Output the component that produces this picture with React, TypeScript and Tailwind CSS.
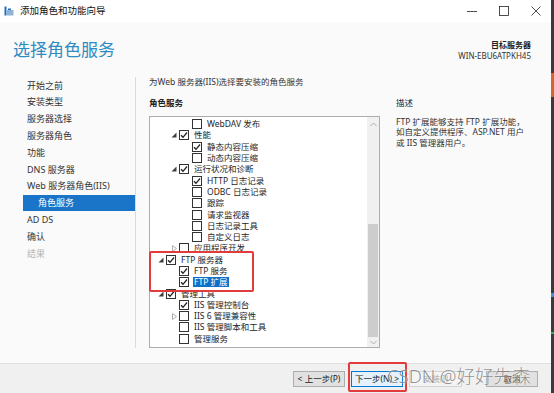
import React from 'react';

type Row = {
  level: 1 | 2 | 3;
  text: string;
  checked: boolean;
  arrow?: 'open' | 'closed';
  selected?: boolean;
};

const rows: Row[] = [
  { level: 3, text: 'WebDAV 发布', checked: false },
  { level: 2, text: '性能', checked: true, arrow: 'open' },
  { level: 3, text: '静态内容压缩', checked: true },
  { level: 3, text: '动态内容压缩', checked: false },
  { level: 2, text: '运行状况和诊断', checked: true, arrow: 'open' },
  { level: 3, text: 'HTTP 日志记录', checked: true },
  { level: 3, text: 'ODBC 日志记录', checked: false },
  { level: 3, text: '跟踪', checked: false },
  { level: 3, text: '请求监视器', checked: false },
  { level: 3, text: '日志记录工具', checked: false },
  { level: 3, text: '自定义日志', checked: false },
  { level: 2, text: '应用程序开发', checked: false, arrow: 'closed' },
  { level: 1, text: 'FTP 服务器', checked: true, arrow: 'open' },
  { level: 2, text: 'FTP 服务', checked: true },
  { level: 2, text: 'FTP 扩展', checked: true, selected: true },
  { level: 1, text: '管理工具', checked: true, arrow: 'open' },
  { level: 2, text: 'IIS 管理控制台', checked: true },
  { level: 2, text: 'IIS 6 管理兼容性', checked: false, arrow: 'closed' },
  { level: 2, text: 'IIS 管理脚本和工具', checked: false },
  { level: 2, text: '管理服务', checked: false },
];

const indent = { 1: 'pl-[6px]', 2: 'pl-[19px]', 3: 'pl-[32px]' };

const navItems = [
  '开始之前',
  '安装类型',
  '服务器选择',
  '服务器角色',
  '功能',
  'DNS 服务器',
  'Web 服务器角色(IIS)',
];

const Checkbox = ({ checked }: { checked: boolean }) => (
  <span className="w-[10px] h-[10px] border border-[#333] bg-white flex items-center justify-center shrink-0">
    {checked && (
      <svg width="8" height="8" viewBox="0 0 8 8">
        <path d="M1 4.2 L3 6.3 L7 1.5" fill="none" stroke="#222" strokeWidth="1.3" />
      </svg>
    )}
  </span>
);

const Arrow = ({ kind }: { kind?: 'open' | 'closed' }) => (
  <span className="w-[10px] h-[10px] flex items-center justify-center shrink-0">
    {kind === 'open' && (
      <svg width="6" height="6" viewBox="0 0 6 6">
        <path d="M5.5 0.5 L5.5 5.5 L0.5 5.5 Z" fill="#404040" />
      </svg>
    )}
    {kind === 'closed' && (
      <svg width="5" height="7" viewBox="0 0 5 7">
        <path d="M0.5 0.5 L4.5 3.5 L0.5 6.5 Z" fill="none" stroke="#a6a6a6" strokeWidth="0.9" />
      </svg>
    )}
  </span>
);

const TreeRow = ({ row }: { row: Row }) => (
  <div className={`h-[11.3px] flex items-center ${indent[row.level]}`}>
    <Arrow kind={row.arrow} />
    <Checkbox checked={row.checked} />
    <span
      className={`ml-[4px] leading-[10px] px-[1px] ${
        row.selected ? 'bg-[#0d6fca] text-white' : 'text-[#1e1e1e]'
      }`}
    >
      {row.text}
    </span>
  </div>
);

const App: React.FC = () => {
  return (
    <div className="w-[554px] h-[393px] flex overflow-hidden bg-[#3a3a3a] font-['Noto_Sans','Noto_Sans_CJK_SC',sans-serif] text-[8.5px] text-[#1e1e1e]">
      <div className="w-[551px] flex flex-col bg-[#fafafa]">
        {/* title bar */}
        <div className="h-[22px] bg-white flex items-center shrink-0">
          <svg width="10" height="10" viewBox="0 0 10 10" className="ml-[4px]">
            <rect x="0.5" y="0.5" width="2" height="9" fill="#1f6fbf" />
            <rect x="3" y="4" width="6.5" height="5.5" fill="#8fb3d6" />
            <rect x="4" y="2.5" width="3" height="1.5" fill="#1f6fbf" />
          </svg>
          <span className="ml-[6px] text-[9.5px] text-[#111]">添加角色和功能向导</span>
          <div className="ml-auto flex items-center">
            <svg width="10" height="10" viewBox="0 0 10 10" className="mr-[22px]">
              <path d="M0 5.5 H10" stroke="#222" strokeWidth="0.8" />
            </svg>
            <svg width="10" height="10" viewBox="0 0 10 10" className="mr-[22px]">
              <rect x="0.5" y="0.5" width="9" height="9" fill="none" stroke="#222" strokeWidth="0.8" />
            </svg>
            <svg width="10" height="10" viewBox="0 0 10 10" className="mr-[10px]">
              <path d="M0.5 0.5 L9.5 9.5 M9.5 0.5 L0.5 9.5" stroke="#222" strokeWidth="0.8" />
            </svg>
          </div>
        </div>

        {/* header */}
        <div className="h-[55px] flex items-start justify-between shrink-0">
          <div className="ml-[13px] mt-[16px] text-[17px] leading-[24px] text-[#2f8cc0]">选择角色服务</div>
          <div className="mr-[20px] mt-[17px] text-right leading-[11px] text-[8px]">
            <div className="font-semibold text-[#222]">目标服务器</div>
            <div className="text-[#333]">WIN-EBU6ATPKH45</div>
          </div>
        </div>

        {/* body */}
        <div className="flex-1 flex pb-[15px]">
          <div className="w-[136px] border-r border-[#dadada] text-[9px] shrink-0">
            {navItems.map((item) => (
              <div key={item} className="h-[16.8px] flex items-center pl-[27px] text-[#333]">
                {item}
              </div>
            ))}
            <div className="h-[16.8px] ml-[23px] flex items-center pl-[15px] bg-[#1a74c7] text-white">角色服务</div>
            <div className="h-[16.8px] flex items-center pl-[27px] text-[#333]">AD DS</div>
            <div className="h-[16.8px] flex items-center pl-[27px] text-[#333]">确认</div>
            <div className="h-[16.8px] flex items-center pl-[27px] text-[#b4b4b4]">结果</div>
          </div>

          <div className="w-[244px] pl-[13px] flex flex-col shrink-0">
            <div className="leading-[10px] text-[#333]">为Web 服务器(IIS)选择要安装的角色服务</div>
            <div className="mt-[11px] leading-[10px] font-semibold text-[#222]">角色服务</div>
            <div className="mt-[8px] h-[232px] w-[231px] border border-[#abadb3] bg-white flex relative">
              <div className="flex-1 pt-[1.5px]">
                {rows.map((r) => (
                  <TreeRow key={r.text} row={r} />
                ))}
              </div>
              <div className="w-[12px] bg-[#f0f0f0] flex flex-col">
                <div className="h-[14px] flex items-center justify-center">
                  <svg width="7" height="5" viewBox="0 0 7 5">
                    <path d="M0.5 4 L3.5 1 L6.5 4" fill="none" stroke="#a8a8a8" strokeWidth="0.9" />
                  </svg>
                </div>
                <div className="flex-1" />
                <div className="h-[113px] mx-[1px] bg-[#cdcdcd]" />
                <div className="h-[10px] flex items-center justify-center">
                  <svg width="7" height="5" viewBox="0 0 7 5">
                    <path d="M0.5 1 L3.5 4 L6.5 1" fill="none" stroke="#a8a8a8" strokeWidth="0.9" />
                  </svg>
                </div>
              </div>
              <div className="absolute left-[-1px] top-[134px] w-[105px] h-[41px] border-2 border-[#e23b3b] rounded-[2px]" />
            </div>
          </div>

          <div className="flex-1 pl-[16px] pt-[21px]">
            <div className="leading-[10px] text-[#222]">描述</div>
            <div className="mt-[9px] leading-[10.3px] text-[#333]">
              FTP 扩展能够支持 FTP 扩展功能，
              <br />
              如自定义提供程序、ASP.NET 用户
              <br />
              或 IIS 管理器用户。
            </div>
          </div>
        </div>

        {/* footer */}
        <div className="h-[30px] border-t border-[#dfdfdf] bg-[#f0f0f0] flex items-center justify-end pr-[13px] relative shrink-0">
          <button className="w-[52px] h-[16px] border border-[#adadad] bg-[#e1e1e1] text-[8.5px] leading-[14px] text-[#222]">
            &lt; 上一步(P)
          </button>
          <button className="ml-[6px] w-[52px] h-[16px] border border-[#0078d7] bg-[#e5f1fb] text-[8.5px] leading-[14px] text-[#222]">
            下一步(N) &gt;
          </button>
          <button className="ml-[6px] w-[53px] h-[16px] border border-[#d3d3d3] bg-[#f4f4f4] text-[8.5px] leading-[14px] text-[#a8a8a8]">
            安装(I)
          </button>
          <button className="ml-[24px] w-[52px] h-[16px] border border-[#adadad] bg-[#e1e1e1] text-[8.5px] leading-[14px] text-[#222]">
            取消
          </button>
          <div className="absolute left-[348px] top-[-2px] w-[59px] h-[30px] border-2 border-[#e23b3b] rounded-[2px]" />
          <div className="absolute left-[387px] top-[0px] text-[18.5px] leading-[24px] text-[#6e6e6e]/75 font-light whitespace-nowrap [text-shadow:0_0_2px_#fff]">
            CSDN @好好先森
          </div>
        </div>
      </div>
      <div className="w-[3px] flex flex-col">
        <div className="h-[73px]" />
        <div className="h-[24px] bg-[#d9652c]" />
        <div className="h-[196px]" />
        <div className="h-[4px] bg-[#3f8fd8]" />
        <div className="h-[35px]" />
        <div className="h-[2px] bg-[#37b24d]" />
      </div>
    </div>
  );
};

export default App;
